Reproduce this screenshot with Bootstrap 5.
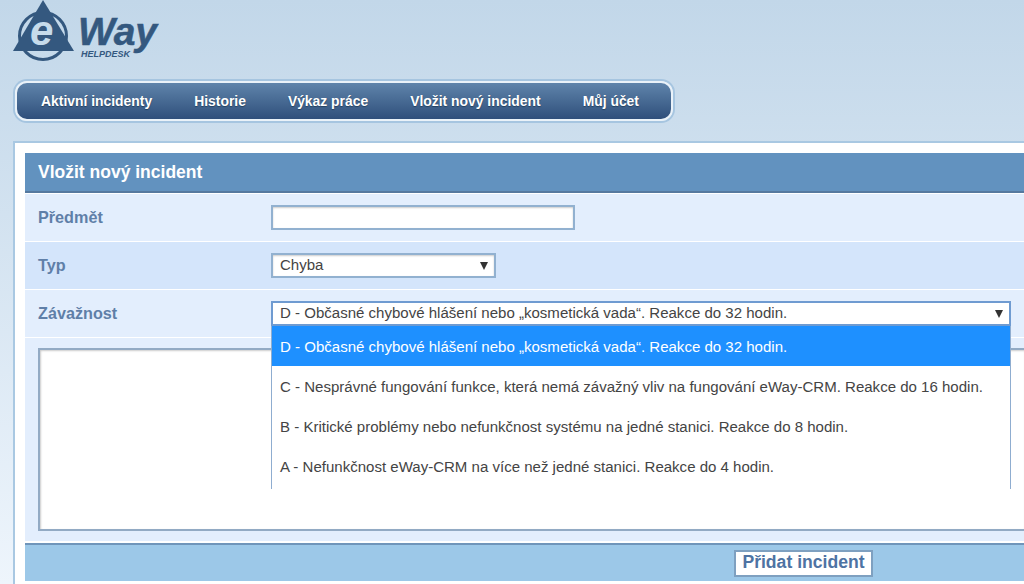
<!DOCTYPE html>
<html lang="cs">
<head>
<meta charset="utf-8">
<title>Vložit nový incident</title>
<link href="https://cdn.jsdelivr.net/npm/bootstrap@5.3.0/dist/css/bootstrap.min.css" rel="stylesheet">
<style>
html,body{height:584px;overflow:hidden}
body{font-family:"Liberation Sans",Arial,sans-serif;background:linear-gradient(#c2d7e9,#eef5fc);color:#444;font-size:15.04px}
.logo-wrap{height:80px;padding-left:13px}
.logo-wrap svg{display:block}
.menu-frame{margin-left:15px;width:658px;height:40px;border:2px solid #eaf2f9;border-radius:12px;box-shadow:0 0 0 2px #a6c5e0;background:linear-gradient(#5f84ab,#2f4f7b);padding:0 0 0 3px;margin-top:1px}
.menu-link{color:#fff;font-weight:700;font-size:13.9px;padding:0 21px;text-decoration:none;text-shadow:0 1px 1px #24405f}
.sheet{margin:20px 0 0 13px;background:#fff;border-left:2px solid #a9c8e2;border-top:2px solid #a9c8e2;padding:10px 0 10px 10px;position:relative}
.sheet-head{height:40px;background:#6292bf;border-bottom:2px solid #56799f;color:#fff;font-weight:700;font-size:17.5px;padding-left:13px}
.form-line{height:47px;background:#e3eefd;margin-top:1px;padding-left:13px}
.form-line.alt{background:#d4e5fb}
.form-name{width:233px;font-weight:700;font-size:16.2px;color:#5f7fa8}
.box-in{height:25px;background:#fff;border:2px solid #92b1d0;box-shadow:inset 0 1px 2px #ccc;padding-left:7px}
.w-subject{width:304px}
.w-type{width:225px}
.w-sev{width:740px;border-color:#6f9bd1;box-shadow:none}
.tri{width:0;height:0;border-left:4px solid transparent;border-right:4px solid transparent;border-top:8px solid #333;margin-left:auto;margin-right:6px}
.area-wrap{background:#e3eefd;height:203px;margin-top:1px;padding:10px 0 0 13px}
.area-box{height:183px;background:#fff;border:2px solid #92aac4;border-right:0;box-shadow:inset 1px 1px 2px #ccc}
.sheet-foot{height:38px;margin-top:2px;background:#9cc8e8;border-top:2px solid #6f95ba;padding-left:709px}
.add-btn{background:#fff;border:2px solid #7ea0c0;border-radius:0;color:#4e73a3;font-weight:700;font-size:17.6px;line-height:1;height:27px;width:139px;padding:0}
.opts{position:absolute;left:256px;top:183px;width:740px;height:163px;overflow:hidden;background:#fff;border-left:1px solid #8fadd0;border-right:1px solid #8fadd0}
.opt{height:40px;padding:2px 0 0 8px}
.opt.on{background:#1e90ff;color:#fff}
</style>
</head>
<body>
<div class="logo-wrap">
<svg width="150" height="62" viewBox="0 0 150 62" role="img" aria-label="eWay Helpdesk">
<circle cx="30" cy="36" r="23.5" fill="none" stroke="#34587f" stroke-width="3"/>
<path d="M30 0 L61 51 L0 51 Z" fill="#34587f"/>
<text x="17" y="45" font-family="Liberation Sans" font-weight="700" font-style="italic" font-size="42" fill="#c6dbeb">e</text>
<text x="65" y="45" font-family="Liberation Sans" font-weight="700" font-style="italic" font-size="39" letter-spacing="-.3" stroke="#34587f" stroke-width=".5" fill="#34587f">Way</text>
<text x="68" y="57" font-family="Liberation Sans" font-weight="700" font-style="italic" font-size="9" fill="#34587f">HELPDESK</text>
</svg>
</div>
<nav class="menu-frame d-flex align-items-center">
<a class="menu-link" href="#">Aktivní incidenty</a>
<a class="menu-link" href="#">Historie</a>
<a class="menu-link" href="#">Výkaz práce</a>
<a class="menu-link" href="#">Vložit nový incident</a>
<a class="menu-link" href="#">Můj účet</a>
</nav>
<main class="sheet">
<div class="sheet-head d-flex align-items-center">Vložit nový incident</div>
<div class="form-line d-flex align-items-center"><div class="form-name">Předmět</div><div class="box-in w-subject"></div></div>
<div class="form-line alt d-flex align-items-center"><div class="form-name">Typ</div><div class="box-in w-type d-flex align-items-center">Chyba<span class="tri"></span></div></div>
<div class="form-line d-flex align-items-center"><div class="form-name">Závažnost</div><div class="box-in w-sev d-flex align-items-center">D - Občasné chybové hlášení nebo „kosmetická vada“. Reakce do 32 hodin.<span class="tri"></span></div></div>
<div class="area-wrap"><div class="area-box"></div></div>
<div class="sheet-foot d-flex align-items-center"><button class="add-btn" type="button">Přidat incident</button></div>
<div class="opts">
<div class="opt on d-flex align-items-center">D - Občasné chybové hlášení nebo „kosmetická vada“. Reakce do 32 hodin.</div>
<div class="opt d-flex align-items-center">C - Nesprávné fungování funkce, která nemá závažný vliv na fungování eWay-CRM. Reakce do 16 hodin.</div>
<div class="opt d-flex align-items-center">B - Kritické problémy nebo nefunkčnost systému na jedné stanici. Reakce do 8 hodin.</div>
<div class="opt d-flex align-items-center">A - Nefunkčnost eWay-CRM na více než jedné stanici. Reakce do 4 hodin.</div>
</div>
</main>
<script src="https://cdn.jsdelivr.net/npm/bootstrap@5.3.0/dist/js/bootstrap.bundle.min.js"></script>
</body>
</html>
